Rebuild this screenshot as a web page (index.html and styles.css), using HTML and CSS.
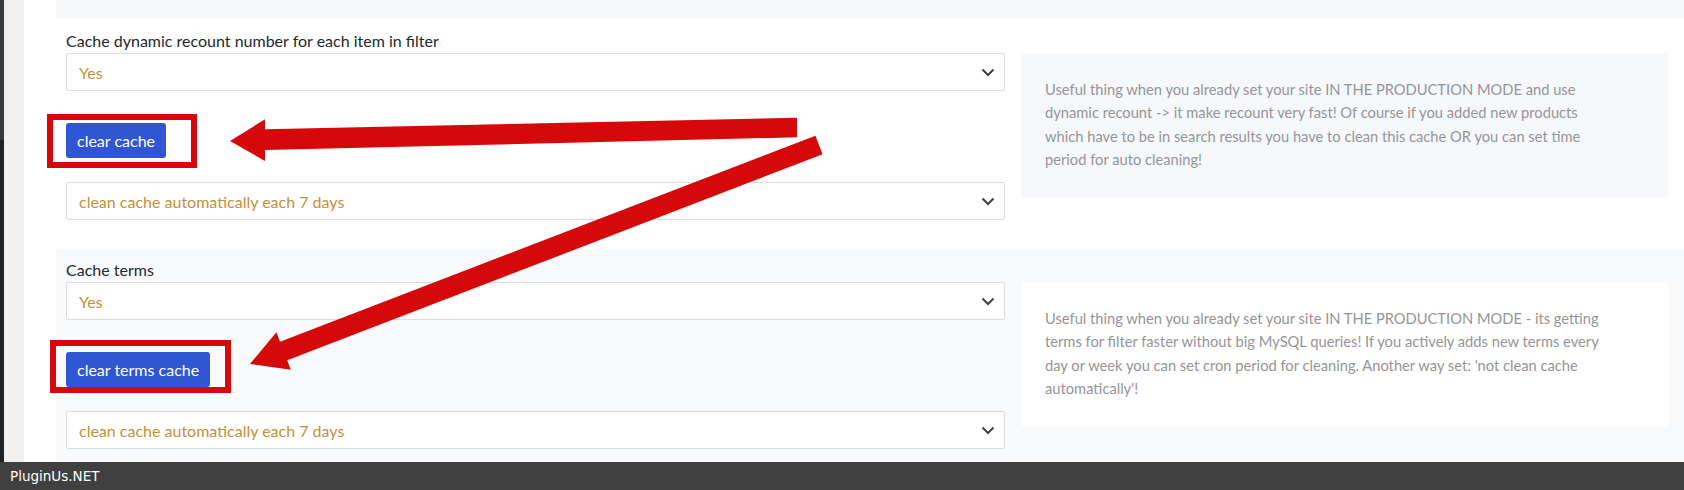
FILE: index.html
```html
<!DOCTYPE html>
<html lang="en">
<head>
<meta charset="utf-8">
<title>Cache options</title>
<link rel="stylesheet" href="styles.css">
</head>
<body>
<div class="shell">
  <div class="edge"></div>
  <div class="gutter"></div>
  <main class="content">
    <div class="strip"></div>

    <section class="option">
      <div class="fields">
        <div class="label">Cache dynamic recount number for each item in filter</div>
        <div class="select"><span>Yes</span><svg class="chev" width="14" height="9" viewBox="0 0 14 9"><polyline points="1.5,1.5 7,7 12.5,1.5" fill="none" stroke="#3c434a" stroke-width="2"/></svg></div>
        <div class="btnrow"><button class="btn">clear cache</button></div>
        <div class="select"><span>clean cache automatically each 7 days</span><svg class="chev" width="14" height="9" viewBox="0 0 14 9"><polyline points="1.5,1.5 7,7 12.5,1.5" fill="none" stroke="#3c434a" stroke-width="2"/></svg></div>
      </div>
      <div class="info info-tint">Useful thing when you already set your site IN THE PRODUCTION MODE and use<br>dynamic recount -&gt; it make recount very fast! Of course if you added new products<br>which have to be in search results you have to clean this cache OR you can set time<br>period for auto cleaning!</div>
    </section>

    <section class="option option-alt">
      <div class="fields">
        <div class="label">Cache terms</div>
        <div class="select"><span>Yes</span><svg class="chev" width="14" height="9" viewBox="0 0 14 9"><polyline points="1.5,1.5 7,7 12.5,1.5" fill="none" stroke="#3c434a" stroke-width="2"/></svg></div>
        <div class="btnrow"><button class="btn">clear terms cache</button></div>
        <div class="select"><span>clean cache automatically each 7 days</span><svg class="chev" width="14" height="9" viewBox="0 0 14 9"><polyline points="1.5,1.5 7,7 12.5,1.5" fill="none" stroke="#3c434a" stroke-width="2"/></svg></div>
      </div>
      <div class="info info-white">Useful thing when you already set your site IN THE PRODUCTION MODE - its getting<br>terms for filter faster without big MySQL queries! If you actively adds new terms every<br>day or week you can set cron period for cleaning. Another way set: 'not clean cache<br>automatically'!</div>
    </section>
  </main>
</div>
<footer class="footer">PluginUs.NET</footer>

<svg class="annot" width="1684" height="490" viewBox="0 0 1684 490">
  <rect x="50" y="117" width="144" height="48" fill="none" stroke="#d50909" stroke-width="6"/>
  <rect x="53" y="343" width="175" height="47" fill="none" stroke="#d50909" stroke-width="6"/>
  <polygon fill="#d50909" points="230,141 265,119.3 265,129.3 797,117.7 797,137.3 265,150 265,161"/>
  <polygon fill="#d50909" points="815.4,135.7 822.6,154.3 287.2,360.3 290.8,369.7 250,364 276.4,332.3 280,341.7"/>
</svg>
</body>
</html>
```
FILE: styles.css
```css
* { box-sizing: border-box; }
html, body { margin: 0; padding: 0; }
body {
  width: 1684px;
  height: 490px;
  overflow: hidden;
  display: flex;
  flex-direction: column;
  background: #f0f0f1;
  font-family: Lato, "Open Sans", sans-serif;
  position: relative;
}
.shell {
  flex: 1;
  min-height: 0;
  display: flex;
  overflow: hidden;
}
.edge {
  width: 4px;
  background: linear-gradient(#33383d 0, #33383d 140px, #1d2327 140px);
}
.gutter {
  width: 20px;
  background: #f0f0f1;
}
.content {
  flex: 1;
  background: #fff;
  padding-left: 32px;
  display: flex;
  flex-direction: column;
}
.strip {
  height: 18px;
  flex: none;
  background: #f8f9fb;
}
.option {
  flex: none;
  display: flex;
  align-items: center;
  gap: 16px;
  padding: 11px 16px 29px 10px;
  background: #fff;
}
.option-alt {
  background: #f9fafc;
  padding-top: 9px;
}
.fields {
  width: 939px;
  display: flex;
  flex-direction: column;
}
.label {
  font-size: 16px;
  line-height: 24px;
  color: #23282d;
}
.select {
  height: 38px;
  background: #fff;
  border: 1px solid #dcdcde;
  border-radius: 2px;
  display: flex;
  align-items: center;
  justify-content: space-between;
  padding: 0 9px 0 12px;
  font-size: 16px;
  color: #c58f3a;
}
.chev { display: block; }
.btnrow {
  padding: 32px 0 24px;
  display: flex;
}
.btn {
  height: 35px;
  padding: 0 11px;
  border: 0;
  border-radius: 3px;
  background: #3056d3;
  color: #fff;
  font-family: Lato, "Open Sans", sans-serif;
  font-size: 16px;
  line-height: 35px;
}
.info {
  width: 647px;
  height: 144px;
  padding: 25px 24px;
  font-size: 14.7px;
  line-height: 23.5px;
  color: #959595;
  white-space: nowrap;
}
.info-tint { background: #f6f8fc; }
.info-white { background: #fff; }
.footer {
  height: 28px;
  flex: none;
  background: #404040;
  color: #fff;
  font-family: "DejaVu Sans", sans-serif;
  font-size: 13.5px;
  line-height: 28px;
  padding-left: 10px;
}
.annot {
  position: absolute;
  left: 0;
  top: 0;
  pointer-events: none;
}
```
